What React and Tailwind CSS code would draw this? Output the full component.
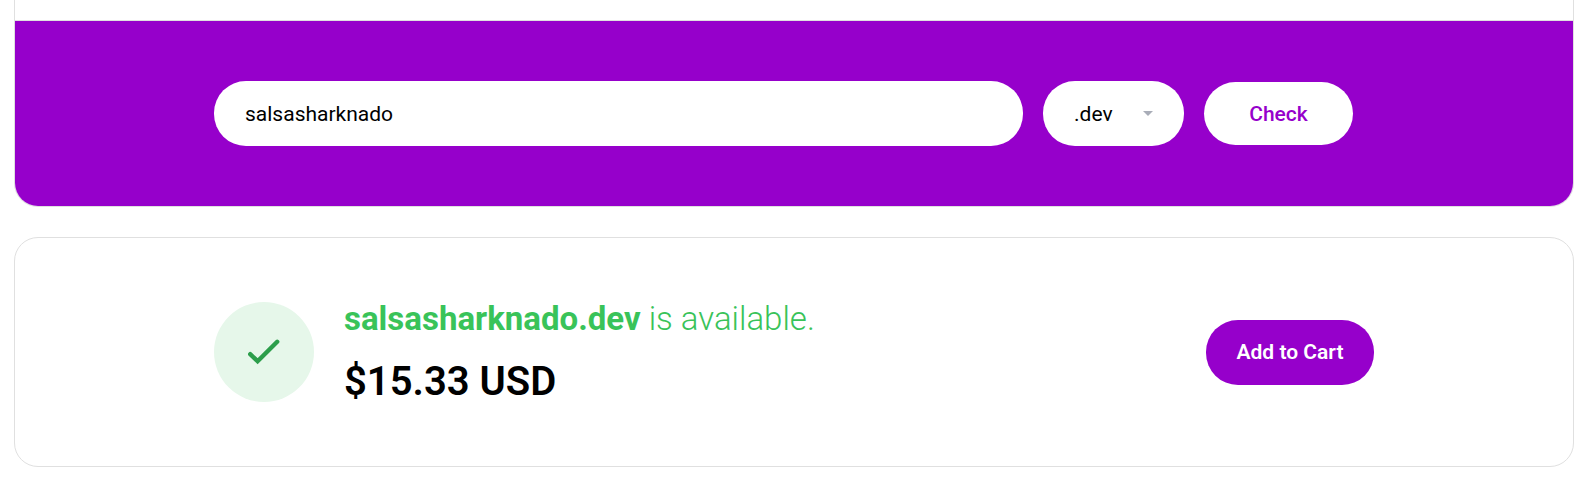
import { useState } from "react";

const extensions = [".dev", ".com", ".net", ".org"];

function SearchForm() {
  const [name, setName] = useState("salsasharknado");
  return (
    <form
      className="mx-auto flex max-w-[1160px] items-center gap-5 pr-[21px]"
      onSubmit={(event) => event.preventDefault()}
    >
      <input
        type="text"
        aria-label="Domain name"
        value={name}
        onChange={(event) => setName(event.target.value)}
        className="h-[65px] min-w-0 flex-1 rounded-[32px] bg-white px-[31px] text-[21px] text-black outline-none"
      />
      <div className="relative shrink-0">
        <select
          aria-label="Domain extension"
          className="h-[65px] w-[141px] appearance-none rounded-[32px] bg-white pt-px pl-[31px] text-[21px] leading-8 text-black outline-none"
        >
          {extensions.map((extension) => (
            <option key={extension}>{extension}</option>
          ))}
        </select>
        <svg
          viewBox="0 0 10 5"
          className="pointer-events-none absolute top-[30px] right-[31px] h-[5px] w-[10px] fill-[#a9adb8]"
          aria-hidden="true"
        >
          <path d="M0 0h10L5 5z" />
        </svg>
      </div>
      <button
        type="submit"
        className="h-[63px] w-[149px] shrink-0 rounded-[32px] bg-white text-[21px] leading-8 font-medium text-[#9600cb]"
      >
        Check
      </button>
    </form>
  );
}

function Result() {
  return (
    <section className="rounded-3xl border border-[#e0e0e0] px-8 py-16">
      <div className="mx-auto flex max-w-[1160px] items-center">
        <div className="flex size-[100px] shrink-0 items-center justify-center rounded-full bg-[#e6f7ea]">
          <svg viewBox="0 0 32 26" className="h-[26px] w-8" fill="none" aria-hidden="true">
            <path d="M2.2 15.2L9.6 22.2L29.2 2.8" stroke="#2c9e4b" strokeWidth="4.4" strokeLinecap="round" />
          </svg>
        </div>
        <div className="ml-[30px] flex-1">
          <h2 className="text-[33px] leading-[34px] font-light text-[#39c359]">
            <strong className="font-bold">salsasharknado.dev</strong> is available.
          </h2>
          <p className="mt-[26px] text-[40px] leading-10 font-semibold text-black">$15.33 USD</p>
        </div>
        <button
          type="button"
          className="h-[65px] w-[168px] shrink-0 rounded-[32px] bg-[#9600cb] text-[21px] leading-8 font-semibold text-white"
        >
          Add to Cart
        </button>
      </div>
    </section>
  );
}

export default function App() {
  return (
    <main className="bg-white pr-[11px] pb-4 pl-[14px] font-['Roboto',sans-serif]">
      <section className="overflow-hidden rounded-b-3xl border border-t-0 border-[#e0e0e0]">
        <div className="h-5" />
        <div className="border-t border-[#e0e0e0] bg-[#9600cb] px-8 py-[60px]">
          <SearchForm />
        </div>
      </section>
      <div className="mt-[30px]">
        <Result />
      </div>
    </main>
  );
}
